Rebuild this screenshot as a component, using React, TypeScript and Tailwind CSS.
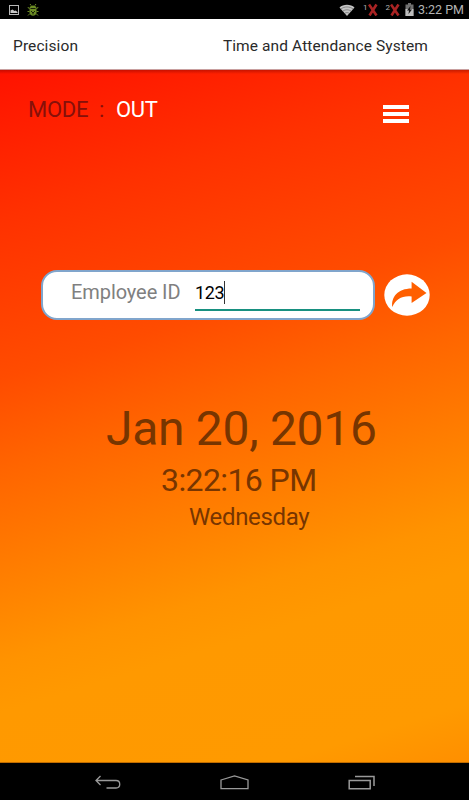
import React from "react";

function StatusBar() {
  return (
    <div className="flex h-[19px] shrink-0 items-center bg-black text-[#b4b4b4]">
      <svg className="ml-[8px] h-[12px] w-[12px]" viewBox="0 0 12 12">
        <rect x="1.5" y="1.5" width="9" height="9" fill="none" stroke="#b8b8b8" />
        <path d="M2.5 9V6.500l2-1 2 1.500 1-.5L9.500 8v1z" fill="#c8c8c8" />
      </svg>
      <svg className="ml-[7px] h-[14px] w-[12px]" viewBox="0 0 12 14">
        <path d="M3 1l1.200 1.600M9 1L7.800 2.600M.8 4l1.700 2M11.200 4L9.500 6M.5 8.500h2M9.500 8.500h2M1 12.500l2-2M11 12.500l-2-2" stroke="#6c8c25" fill="none" />
        <path d="M2.500 5C2.500 1.500 9.500 1.500 9.500 5v4.500c0 4.200-7 4.200-7 0z" fill="#6c8c25" />
        <path d="M3.500 5.500h5M4 8l2 2 2-2M6 10v1.500" stroke="#192107" fill="none" />
      </svg>
      <div className="flex-1" />
      <svg className="h-[12px] w-[16px]" viewBox="0 0 16 12">
        <path d="M0.500 3.500C4-.3 12-.3 15.500 3.500L8 12z" fill="#c4c4c4" />
        <path d="M1.700 5.200c3.500-3 9.100-3 12.600 0M3.700 7.300c2.400-2 6.200-2 8.600 0M5.700 9.400c1.400-1.100 3.200-1.100 4.600 0" stroke="#444" strokeWidth=".5" fill="none" />
      </svg>
      <span className="ml-[8px] -mt-[3px] text-[8px] leading-none">1</span>
      <svg className="h-[13px] w-[10px]" viewBox="0 0 10 13">
        <path d="M1 1.500l7.500 11M8.500 1.500l-7 11" stroke="#a92323" strokeWidth="2.600" />
      </svg>
      <span className="ml-[8px] -mt-[3px] text-[8px] leading-none">2</span>
      <svg className="h-[13px] w-[10px]" viewBox="0 0 10 13">
        <path d="M1 1.500l7.500 11M8.500 1.500l-7 11" stroke="#a92323" strokeWidth="2.600" />
      </svg>
      <svg className="ml-[5px] h-[13px] w-[9px]" viewBox="0 0 9 13">
        <path d="M.5 1.500h2.500V0h3v1.500h2.500V13h-8z" fill="#707070" />
        <path d="M.5 6h8v7h-8z" fill="#bdbdbd" />
        <path d="M5.500 3L2 7.500h2L3.500 11 7 6.500H5z" fill="#111" />
      </svg>
      <span className="ml-[4px] mr-[5px] w-[46px] whitespace-nowrap text-[12.500px] leading-[19px]">3:22 PM</span>
    </div>
  );
}

function TitleBar() {
  return (
    <header className="flex h-[51px] shrink-0 items-center justify-between border-b border-[#c9a0a0] bg-white pl-[13px] pr-[41px] pt-[5px] text-[15.500px] tracking-[0.1px] text-[#2a2a2a]">
      <span>Precision</span>
      <span>Time and Attendance System</span>
    </header>
  );
}

function EmployeeEntry() {
  return (
    <div className="mt-[145px] flex items-center pl-[41px]">
      <div className="flex h-[50px] w-[334px] items-start rounded-[16px] border-2 border-[#80a5cc] bg-white pl-[28px]">
        <label className="mt-[7px] w-[124px] whitespace-nowrap text-[20px] leading-[26px] tracking-[-0.08px] text-[#808080]">Employee ID</label>
        <div className="flex h-[39px] w-[165px] items-start border-b-2 border-[#179080] pt-[8px] text-[18px] leading-[26px] tracking-[-0.4px] text-black">
          <span>123</span>
          <span className="mt-[1px] h-[23px] w-px bg-[#333]" />
        </div>
      </div>
      <button className="ml-[9px] h-[42px] w-[46px]" aria-label="Submit">
        <svg className="h-[42px] w-[46px]" viewBox="0 0 46 42">
          <ellipse cx="23" cy="21" rx="22.700" ry="20.700" fill="white" />
          <path d="M8.300 33C7 23 14 14.500 27.600 14.500V7.800L42.500 19 27.600 29V22.500C18 21.500 12 25 8.300 33z" fill="#ff5f00" />
        </svg>
      </button>
    </div>
  );
}

function NavigationBar() {
  return (
    <nav className="flex h-[37px] shrink-0 items-start bg-black pt-[11px] text-[#9a9a9a]">
      <svg className="ml-[94px] h-[16px] w-[28px]" viewBox="0 0 28 16" fill="none" stroke="currentColor" strokeWidth="1.300">
        <path d="M6.500 2L2 6.500 6.500 11M2 6.500h20c5 0 5 7.500 0 7.500h-9.500" />
      </svg>
      <svg className="ml-[97px] h-[16px] w-[30px]" viewBox="0 0 30 16" fill="none" stroke="currentColor" strokeWidth="1.300">
        <path d="M2 6l13.500-4L29 6v8.700H2z" />
      </svg>
      <svg className="ml-[98px] h-[16px] w-[30px]" viewBox="0 0 30 16" fill="none" stroke="currentColor" strokeWidth="1.500">
        <path d="M2.200 6.500h21v8.200h-21zM8 2.500h19V12" />
      </svg>
    </nav>
  );
}

export default function App() {
  return (
    <div className="flex h-[800px] w-[469px] flex-col overflow-hidden font-[Roboto,sans-serif]">
      <StatusBar />
      <TitleBar />
      <main className="flex flex-1 flex-col border-b border-[#c06c00] bg-[linear-gradient(180deg,rgba(120,0,0,0.4)_0px,rgba(120,0,0,0)_4px),linear-gradient(163deg,#ff1200_0%,#ff3100_18%,#ff4c00_37%,#ff6500_48%,#ff9300_71%,#ff9900_77%,#ff9a00_93%,#ff8f00_100%)]">
        <div className="flex h-[55px] items-start pl-[28px] pt-[27px] text-[22px] leading-[26px] tracking-[-0.3px]">
          <span className="w-[71px] text-[#86100a]">MODE</span>
          <span className="w-[17px] text-[#86100a]">:</span>
          <span className="text-white">OUT</span>
          <button className="ml-auto mr-[60px] mt-[8px] flex w-[26px] flex-col gap-[3px]" aria-label="Menu">
            <span className="h-[4px] w-full bg-white" />
            <span className="h-[4px] w-full bg-white" />
            <span className="h-[4px] w-full bg-white" />
          </button>
        </div>
        <EmployeeEntry />
        <div className="mt-[80px] flex flex-col whitespace-nowrap text-[#773500]">
          <span className="ml-[106px] text-[48px] leading-[58px] tracking-[-0.3px]">Jan 20, 2016</span>
          <span className="ml-[161px] mt-[3px] text-[32px] leading-[38px] tracking-[-0.6px]">3:22:16 PM</span>
          <span className="ml-[189px] mt-[4px] text-[24px] leading-[28px] tracking-[-0.35px]">Wednesday</span>
        </div>
      </main>
      <NavigationBar />
    </div>
  );
}
